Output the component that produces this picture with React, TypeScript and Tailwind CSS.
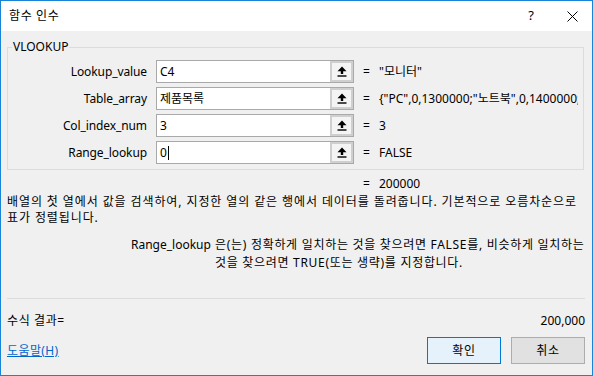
import React from "react";

const FONT = { fontFamily: '"Noto Sans", "Noto Sans CJK KR", sans-serif' };

function UpIcon() {
  return (
    <svg width="10" height="11" viewBox="0 0 10 11">
      <path d="M5 0.5 L9.5 5.2 L6.2 5.2 L6.2 8 L3.8 8 L3.8 5.2 L0.5 5.2 Z" fill="#000" />
      <rect x="0.5" y="9.3" width="9" height="1.4" fill="#000" />
    </svg>
  );
}

function Row({ label, value, result, cursor }: { label: string; value: string; result: string; cursor?: boolean }) {
  return (
    <div className="flex items-center h-[23px]">
      <div className="w-[139px] text-right text-[12px] text-black tracking-[-0.1px]">{label}</div>
      <div className="ml-[9px] w-[198px] h-[23px] flex border border-[#a9a9a9] bg-white">
        <div className="flex-1 flex items-center pl-[3px] text-[12px] text-black">
          {value}
          {cursor && <span className="inline-block w-px h-[14px] bg-black ml-px" />}
        </div>
        <div className="w-[23px] h-full flex items-center justify-center border-2 border-[#cfcfcf] bg-[#f4f4f4]">
          <UpIcon />
        </div>
      </div>
      <div className="ml-[9px] w-[16px] text-[12px] text-black">=</div>
      <div className="w-[199px] overflow-hidden whitespace-nowrap text-[12px] text-black">{result}</div>
    </div>
  );
}

export default function App() {
  return (
    <div style={FONT} className="w-[593px] h-[376px] flex flex-col border border-[#1883d7] bg-[#f0f0f0] overflow-hidden">
      <div className="h-[30px] bg-white flex items-center pl-[8px] pr-[14px] shrink-0">
        <span className="text-[12px] text-black tracking-[0.6px]">함수 인수</span>
        <span className="ml-auto text-[13px] text-black mr-[33px]">?</span>
        <svg width="11" height="11" viewBox="0 0 11 11">
          <path d="M0.5 0.5 L10.5 10.5 M10.5 0.5 L0.5 10.5" stroke="#000" strokeWidth="1" />
        </svg>
      </div>
      <div className="flex-1 flex flex-col px-[6px]">
        <fieldset className="mt-[9px] w-[577px] h-[130px] border border-[#dcdcdc] pt-[6px]">
          <legend className="ml-[4px] px-[1px] text-[12px] text-black leading-[14px]">VLOOKUP</legend>
          <div className="flex flex-col gap-[4px]">
            <Row label="Lookup_value" value="C4" result={'"모니터"'} />
            <Row label="Table_array" value="제품목록" result={'{"PC",0,1300000;"노트북",0,1400000;"모니터",0,200000}'} />
            <Row label="Col_index_num" value="3" result="3" />
            <Row label="Range_lookup" value="0" result="FALSE" cursor />
          </div>
        </fieldset>
        <div className="mt-[6px] flex text-[12px] text-black leading-[16px]">
          <span className="ml-[356px] w-[16px]">=</span>
          <span>200000</span>
        </div>
        <div className="mt-[2px] text-[12px] text-black leading-[16px] tracking-[0.9px] whitespace-nowrap">
          배열의 첫 열에서 값을 검색하여, 지정한 열의 같은 행에서 데이터를 돌려줍니다. 기본적으로 오름차순으로
          <br />
          표가 정렬됩니다.
        </div>
        <div className="mt-[10px] flex text-[12px] text-black leading-[18px]">
          <div className="ml-[124px] w-[84px] shrink-0">Range_lookup</div>
          <div className="tracking-[0.7px] whitespace-nowrap">
            은(는) 정확하게 일치하는 것을 찾으려면 FALSE를, 비슷하게 일치하는
            <br />
            것을 찾으려면 TRUE(또는 생략)를 지정합니다.
          </div>
        </div>
        <div className="mt-[26px] h-px bg-[#dcdcdc] w-[578px]" />
        <div className="mt-[14px] flex text-[12px] text-black leading-[16px]">
          <span className="tracking-[0.6px]">수식 결과=</span>
          <span className="ml-auto mr-[1px]">200,000</span>
        </div>
        <div className="mt-[8px] flex items-center">
          <span className="text-[12px] text-[#0066cc] underline tracking-[0.4px]">도움말(H)</span>
          <button className="ml-auto w-[74px] h-[27px] border border-[#0078d7] bg-[#e5f1fb] text-[12px] text-black tracking-[0.6px]">확인</button>
          <button className="ml-[10px] mr-[1px] w-[74px] h-[27px] border border-[#adadad] bg-[#e1e1e1] text-[12px] text-black tracking-[0.6px]">취소</button>
        </div>
      </div>
    </div>
  );
}
